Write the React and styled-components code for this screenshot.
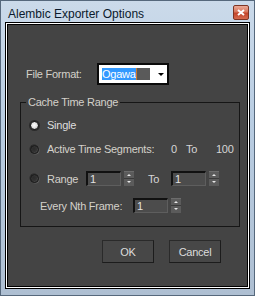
import React from "react";
import styled, { createGlobalStyle } from "styled-components";

const Global = createGlobalStyle`
  html, body { margin: 0; padding: 0; background: #ffffff; }
  body { font-family: "Liberation Sans", Arial, sans-serif; }
`;

const Window = styled.div`
  width: 255px;
  height: 296px;
  box-sizing: border-box;
  border: 1px solid #56687c;
  background: linear-gradient(#cbdaea, #b9cde2 40%, #aebfd2);
  padding: 0 4px 6px;
  display: flex;
  flex-direction: column;
`;

const TitleBar = styled.div`
  height: 21px;
  display: flex;
  align-items: flex-start;
  justify-content: space-between;
  padding-left: 3px;
`;

const Title = styled.span`
  font-size: 12px;
  line-height: 12px;
  margin-top: 7px;
  color: #0b1a2c;
`;

const CloseButton = styled.div`
  width: 16px;
  height: 15px;
  margin-top: 4px;
  margin-right: 1px;
  box-sizing: border-box;
  border: 1px solid #7e3524;
  border-radius: 2px;
  background: linear-gradient(#eba996, #d8765c 45%, #c2442a 55%, #d56a4e);
  display: flex;
  align-items: center;
  justify-content: center;
`;

const Client = styled.div`
  flex: 1;
  border: 1px solid #000;
  box-shadow: inset 0 0 0 1px #fff, inset 0 0 0 2px #000;
  background: #444444;
  padding: 40px 9px 0 14px;
  display: flex;
  flex-direction: column;
  font-size: 11px;
  letter-spacing: -0.25px;
  color: #d6d6d6;
`;

const FileRow = styled.div`
  display: flex;
  align-items: center;
  padding-left: 6px;
  height: 22px;
`;

const FieldLabel = styled.span`
  width: ${(p) => p.$w}px;
  margin-left: ${(p) => p.$ml || 0}px;
  color: ${(p) => p.$color || "#d4d1ca"};
  white-space: nowrap;
`;

const Dropdown = styled.div`
  width: 72px;
  height: 22px;
  box-sizing: border-box;
  border: 2px solid #0a0a0a;
  background: #fff;
  display: flex;
  align-items: center;
  padding: 0 3px;
`;

const Selected = styled.span`
  background: #3399ff;
  color: #fff;
  height: 12px;
  line-height: 12px;
  border-right: 1px solid #d07b2a;
`;

const Rest = styled.span`
  width: 13px;
  height: 12px;
  background: #5a5a5a;
`;

const Arrow = styled.span`
  margin-left: auto;
  width: 0;
  height: 0;
  border-left: 3px solid transparent;
  border-right: 3px solid transparent;
  border-top: 3px solid #000;
`;

const Group = styled.fieldset`
  margin: 11px 0 0;
  padding: 0 0 13px;
  min-width: 0;
  border: 1px solid #161616;
  display: flex;
  flex-direction: column;
`;

const Legend = styled.legend`
  margin-left: 5px;
  padding: 0 2px;
  line-height: 13px;
  color: #d4d1ca;
`;

const Row = styled.div`
  display: flex;
  align-items: center;
  height: ${(p) => p.$h || 16}px;
  margin-top: ${(p) => p.$mt}px;
  padding-left: ${(p) => p.$pl || 9}px;
`;

const Radio = styled.span`
  width: 9px;
  height: 9px;
  box-sizing: border-box;
  border-radius: 50%;
  border: 1px solid #161616;
  margin-right: 8px;
  flex-shrink: 0;
  box-shadow: ${(p) => (p.$on ? "0 0 0 1px #2a2a2a" : "1px 1px 0 -0.5px #5e5e5e, -0.5px -0.5px 0 0 #262626")};
  background: ${(p) =>
    p.$on
      ? "radial-gradient(circle at 45% 45%, #ffffff 0, #e4e4e4 45%, #9a9a9a 100%)"
      : "radial-gradient(circle at 40% 40%, #2a2a2a 0, #333 50%, #626262 100%)"};
`;

const Value = styled.span`
  width: ${(p) => p.$w}px;
  margin-left: ${(p) => p.$ml || 0}px;
  color: #d6d6d6;
`;

const SpinWrap = styled.div`
  display: flex;
  align-items: center;
  margin-left: ${(p) => p.$ml || 0}px;
`;

const NumBox = styled.div`
  width: 35px;
  height: 15px;
  box-sizing: border-box;
  border-top: 2px solid #111;
  border-left: 2px solid #111;
  border-right: 1px solid #5e5e5e;
  border-bottom: 1px solid #5e5e5e;
  background: #4c4c4c;
  color: #e2e2e2;
  padding-left: 2px;
  line-height: 12px;
`;

const SpinButtons = styled.svg`
  margin-left: 3px;
  display: block;
`;

const ButtonRow = styled.div`
  display: flex;
  justify-content: flex-end;
  gap: 15px;
  margin-top: 13px;
  padding-right: 19px;
`;

const Button = styled.div`
  width: 52px;
  height: 23px;
  box-sizing: border-box;
  border: 1px solid #2a2a2a;
  border-right-color: #1c1c1c;
  border-bottom-color: #1c1c1c;
  background: #474747;
  color: #dcdcdc;
  display: flex;
  align-items: center;
  justify-content: center;
`;

const Spinner = ({ value, ml }) => (
  <SpinWrap $ml={ml}>
    <NumBox>{value}</NumBox>
    <SpinButtons width="10" height="15" viewBox="0 0 10 15">
      <rect x="0" y="0" width="10" height="15" fill="#5b5b5b" />
      <rect x="0" y="0" width="10" height="1" fill="#6c6c6c" />
      <rect x="0" y="7" width="10" height="1" fill="#3a3a3a" />
      <path d="M3 5 L5 3 L7 5 Z" fill="#e8e8e8" />
      <path d="M3 10 L5 12 L7 10 Z" fill="#e8e8e8" />
    </SpinButtons>
  </SpinWrap>
);

export default function App() {
  return (
    <>
      <Global />
      <Window>
        <TitleBar>
          <Title>Alembic Exporter Options</Title>
          <CloseButton>
            <svg width="8" height="7" viewBox="0 0 8 7">
              <path d="M1 1 L7 6 M7 1 L1 6" stroke="#fff" strokeWidth="2" />
            </svg>
          </CloseButton>
        </TitleBar>
        <Client>
          <FileRow>
            <FieldLabel $w={71}>File Format:</FieldLabel>
            <Dropdown>
              <Selected>Ogawa</Selected>
              <Rest />
              <Arrow />
            </Dropdown>
          </FileRow>
          <Group>
            <Legend>Cache Time Range</Legend>
            <Row $mt={8}>
              <Radio $on />
              <FieldLabel $color="#dedede">Single</FieldLabel>
            </Row>
            <Row $mt={8}>
              <Radio />
              <FieldLabel $w={124}>Active Time Segments:</FieldLabel>
              <Value $w={6}>0</Value>
              <Value $w={13} $ml={9}>To</Value>
              <Value $w={19} $ml={17}>100</Value>
            </Row>
            <Row $mt={14} $h={15}>
              <Radio />
              <FieldLabel $w={39}>Range</FieldLabel>
              <Spinner value="1" />
              <Value $w={13} $ml={14}>To</Value>
              <Spinner value="1" ml={10} />
            </Row>
            <Row $mt={12} $h={15} $pl={19}>
              <FieldLabel $w={93}>Every Nth Frame:</FieldLabel>
              <Spinner value="1" />
            </Row>
          </Group>
          <ButtonRow>
            <Button>OK</Button>
            <Button>Cancel</Button>
          </ButtonRow>
        </Client>
      </Window>
    </>
  );
}
